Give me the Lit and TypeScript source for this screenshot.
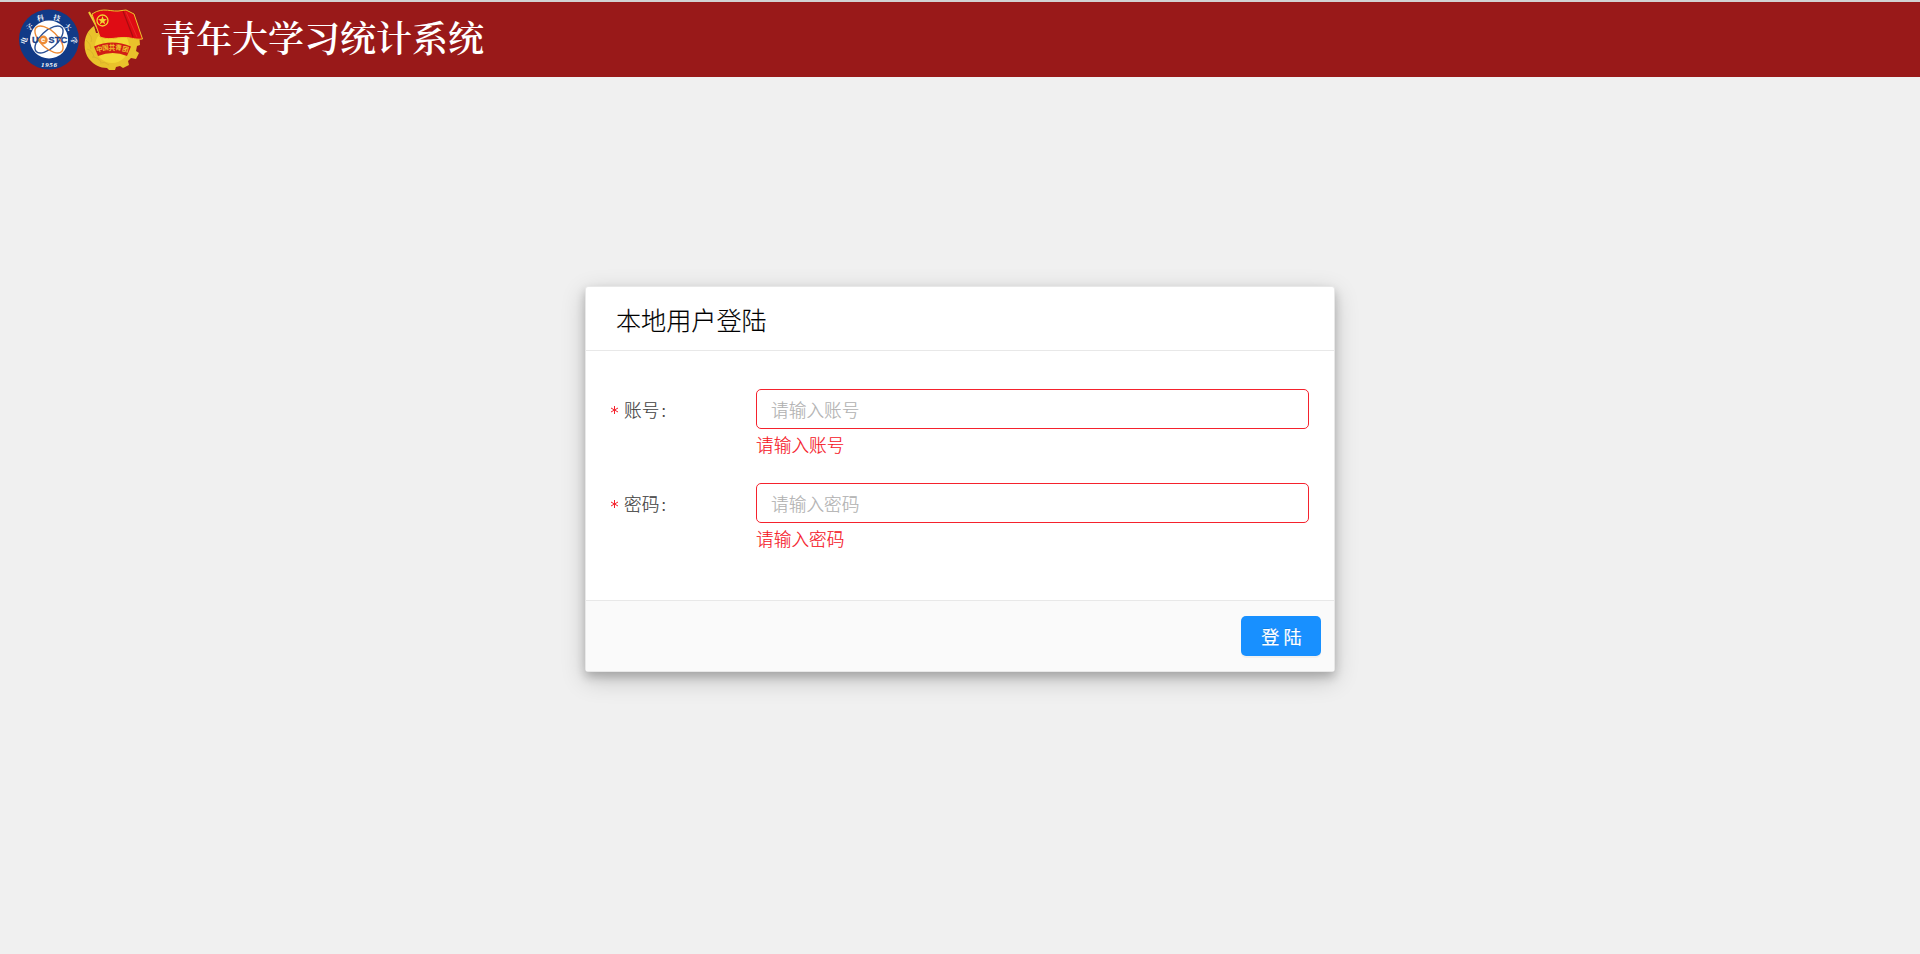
import { LitElement, html, css, svg } from "lit";
import { customElement, property } from "lit/decorators.js";

const ring: [string, number, number, number][] = [
  ["电", 5.2, 31.5, -70], ["子", 10.6, 18.3, -35], ["科", 21.5, 9, -12],
  ["技", 38, 9, 12], ["大", 48.8, 18.3, 35], ["学", 54.9, 31.5, 70],
];

@customElement("school-badge")
export class SchoolBadge extends LitElement {
  static styles = css`:host{display:block;width:60px;height:61px} svg{display:block}`;
  render() {
    return html`<svg width="60" height="61" viewBox="0 0 60 61">
      <circle cx="30" cy="30.5" r="30" fill="#113a87"/>
      <circle cx="30" cy="30.5" r="19" fill="#fff"/>
      <g fill="none" stroke-width="1.4">
        <ellipse cx="30" cy="30.5" rx="17.5" ry="8.5" transform="rotate(-43 30 30.5)" stroke="#2b4f94"/>
        <ellipse cx="30" cy="30.5" rx="17.5" ry="8.5" transform="rotate(43 30 30.5)" stroke="#ee8b35"/>
      </g>
      <circle cx="24.3" cy="31" r="4.4" fill="#ee8b35"/>
      <g font-family="Liberation Sans" font-weight="bold" font-size="9" fill="#1c4187" text-anchor="middle" stroke="#1c4187" stroke-width=".3">
        <text x="16.2" y="34">U</text><text x="24.3" y="33.4" fill="#fff" stroke="none" font-size="8">e</text>
        <text x="32.6" y="34">S</text><text x="38.6" y="34">T</text><text x="45" y="34">C</text>
      </g>
      <g fill="#fff" font-family="Noto Serif CJK SC" font-size="7" font-weight="bold" text-anchor="middle">
        ${ring.map(([c, x, y, r]) => svg`<text x=${x} y=${y + 2.5} transform="rotate(${r} ${x} ${y})">${c}</text>`)}
      </g>
      <text x="30" y="57.5" text-anchor="middle" font-family="Liberation Serif" font-style="italic" font-weight="bold" font-size="7" textLength="16" fill="#fff">1956</text>
    </svg>`;
  }
}

const banner: [string, number, number, number][] = [
  ["中", 15.5, 40.5, -14], ["国", 21.5, 39, -7], ["共", 28, 38.5, 0], ["青", 34.5, 39, 7], ["团", 41.5, 40.5, 14],
];

@customElement("league-badge")
export class LeagueBadge extends LitElement {
  static styles = css`:host{display:block;width:60px;height:62px} svg{display:block}`;
  render() {
    return html`<svg width="60" height="62" viewBox="0 0 60 62">
      <path d="M10 17C-1 24-2 41 5 50c5 6 11 9 18 9l2 2h6l1-3 4-1 3 2 6-3-1-4 3-3 5 1 3-6-3-2 1-5 3-1-1-12H12Z" fill="#e9c22b"/>
      <circle cx="28" cy="37" r="17" fill="#f3d735"/>
      <path d="M4 24q5 4 3 9M2 31q5 4 5 9M3 40q6 2 7 8M8 48q6 0 9 5M16 54q5-2 9 2" fill="none" stroke="#dcb52a" stroke-width="1"/>
      <path d="m5 3 9 17 7 17" fill="none" stroke="#efcd32" stroke-width="2"/>
      <path d="M8 5C20-3 27 4 38 1.5l4-.5 8 4 8.5 25C50 31 47 28 38 28.500C30 29 24 31 16 28Z" fill="#df0c14" stroke="#edc52b" stroke-width="1" stroke-linejoin="round"/>
      <path d="m39 2 10 26" stroke="#a90d10" stroke-width="1.2"/>
      <path d="m42 3 11 25" stroke="#ed3030" stroke-width=".7"/>
      <circle cx="18.500" cy="11.500" r="5.500" fill="none" stroke="#f2d532" stroke-width="1.300"/>
      <path d="m18.500 7 1.100 3.100 3.300.1-2.600 2 .9 3.200-2.700-1.900-2.700 1.900.9-3.200-2.600-2 3.300-.1Z" fill="#f2d532"/>
      <path d="M10 37.500q18-8 37 0l-4 9.500q-14-6-29 0Z" fill="#d11e15"/>
      <g text-anchor="middle" font-family="Noto Sans CJK SC" font-weight="bold" font-size="6.5" fill="#efc52a">
        ${banner.map(([c, x, y, r]) => svg`<text x=${x} y=${y + 2} transform="rotate(${r} ${x} ${y})">${c}</text>`)}
      </g>
    </svg>`;
  }
}

@customElement("form-row")
export class FormRow extends LitElement {
  @property() label = "";
  @property() hint = "";
  static styles = css`
    :host{display:grid;grid-template-columns:146px 553px;height:94px}
    .label{display:flex;align-items:center;box-sizing:border-box;height:40px;padding-bottom:1px;color:#404040}
    .star{width:14px;padding:3px 0 0 1px;box-sizing:border-box}
    .star svg{display:block}
    .colon{margin-left:2px}
    .box{box-sizing:border-box;width:100%;height:40px;border:1px solid #f5222d;border-radius:5px;padding:0 14px 1px;font:inherit;background:#fff;outline:0;display:block}
    .box::placeholder{color:#b0b0b0;opacity:1}
    .error{color:#f5121d;line-height:26px;padding-top:2px}
  `;
  render() {
    return html`<label class="label"><span class="star"><svg width="7" height="8" viewBox="0 0 7 8"><path d="M3.500 0v8M0 2l7 4M0 6l7-4" stroke="#f5222d" stroke-width="1"/></svg></span>${this.label}<span class="colon">:</span></label>
      <div><input class="box" placeholder=${this.hint}><div class="error">${this.hint}</div></div>`;
  }
}

@customElement("app-root")
export class AppRoot extends LitElement {
  static styles = css`
    :host{display:flex;flex-direction:column;height:954px;background:#f0f0f0;font-family:"Noto Sans CJK SC",sans-serif;font-size:17.7px;font-weight:300;-webkit-text-stroke:.15px}
    .bar{display:flex;align-items:center;box-sizing:border-box;height:77px;flex:none;border-top:2px solid #d2d2d2;background:#991919;padding-left:19px;gap:5px}
    .brand{margin:0 0 5px 11px;color:#fff;font:600 36px/50px "Noto Serif CJK SC","Noto Sans CJK SC",serif;white-space:nowrap;-webkit-text-stroke:0}
    .main{flex:1;display:flex;justify-content:center;align-items:flex-start;padding-top:209px}
    .card{box-sizing:border-box;width:750px;height:386px;display:flex;flex-direction:column;background:#fff;border:1px solid #e8e8e8;border-radius:3px;box-shadow:0 5px 10px rgba(0,0,0,.2),0 7.5px 25px rgba(0,0,0,.19)}
    .title{height:63px;border-bottom:1px solid #e8e8e8;padding-left:30px;font-size:25.1px;line-height:64px;color:#000}
    .form{flex:1;padding:38px 25px 0 24px}
    .foot{height:70px;display:flex;justify-content:flex-end;align-items:center;border-top:1px solid #e8e8e8;background:#fafafa;padding-right:13px}
    .submit{width:80px;height:40px;padding:0 0 1px 1px;border:0;border-radius:5px;background:#1890ff;color:#fff;font:400 18.2px "Noto Sans CJK SC",sans-serif;box-shadow:0 2px 0 rgba(0,0,0,.04);text-shadow:0 -1px 0 rgba(0,0,0,.12)}
  `;
  render() {
    return html`<header class="bar"><school-badge></school-badge><league-badge></league-badge><span class="brand">青年大学习统计系统</span></header>
      <main class="main"><section class="card">
        <div class="title">本地用户登陆</div>
        <div class="form"><form-row label="账号" hint="请输入账号"></form-row><form-row label="密码" hint="请输入密码"></form-row></div>
        <div class="foot"><button class="submit">登 陆</button></div>
      </section></main>`;
  }
}
